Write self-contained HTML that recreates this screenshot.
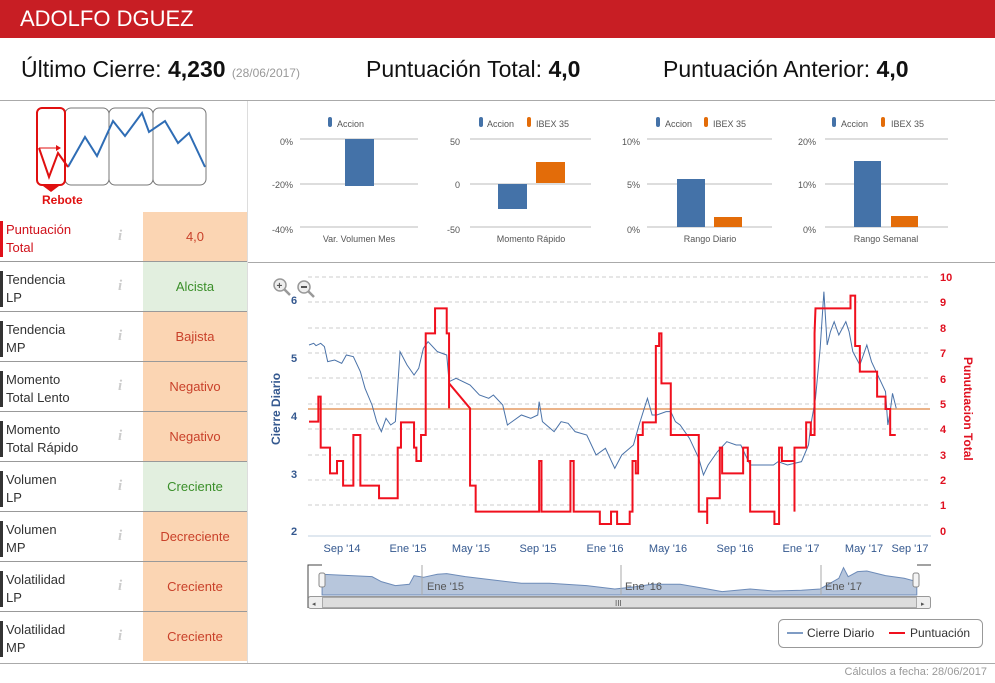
<!DOCTYPE html>
<html><head><meta charset="utf-8"><style>
*{margin:0;padding:0;box-sizing:border-box}
body{width:995px;height:683px;background:#fff;font-family:"Liberation Sans",sans-serif;position:relative;overflow:hidden;color:#222}
.hdr{position:absolute;left:0;top:0;width:995px;height:38px;background:#c81e24;color:#fff;font-size:22px;padding:6px 0 0 20px}
.top{position:absolute;top:56px;font-size:23px;color:#111}
.top b{font-weight:bold}
.top small{font-size:12px;color:#999}
.row{position:absolute;left:0;width:247px;height:50px;border-bottom:1px solid #999}
.row .acc{position:absolute;left:0;top:9px;width:3px;height:36px;background:#333}
.row .lab{position:absolute;left:6px;top:9px;font-size:13px;line-height:18px;color:#333}
.row .i{position:absolute;left:118px;top:16px;font-size:15px;font-style:italic;color:#ccc;font-family:"Liberation Serif",serif;font-weight:bold}
.row .v{position:absolute;left:143px;top:0;width:104px;height:49px;text-align:center;line-height:49px;font-size:13px}
.o{background:#fbd5b3;color:#c9412a}
.g{background:#e2efdf;color:#3b8f2a}
</style></head><body>
<div class="hdr">ADOLFO DGUEZ</div>
<div class="top" style="left:21px">Último Cierre: <b>4,230</b> <small>(28/06/2017)</small></div>
<div class="top" style="left:366px">Puntuación Total: <b>4,0</b></div>
<div class="top" style="left:663px">Puntuación Anterior: <b>4,0</b></div>
<div style="position:absolute;left:0;top:100px;width:995px;height:1px;background:#aaa"></div>
<div style="position:absolute;left:247px;top:262px;width:748px;height:1px;background:#aaa"></div>
<div style="position:absolute;left:247px;top:101px;width:1px;height:562px;background:#ddd"></div>
<div style="position:absolute;left:0;top:663px;width:995px;height:1px;background:#aaa"></div>
<div style="position:absolute;right:8px;top:666px;font-size:11px;color:#999">Cálculos a fecha: 28/06/2017</div>

<div class="row" style="top:212px"><div class="acc" style="background:#e0101a"></div><div class="lab" style="color:#d0101a">Puntuación<br>Total</div><div class="i">i</div><div class="v o">4,0</div></div>
<div class="row" style="top:262px"><div class="acc"></div><div class="lab">Tendencia<br>LP</div><div class="i">i</div><div class="v g">Alcista</div></div>
<div class="row" style="top:312px"><div class="acc"></div><div class="lab">Tendencia<br>MP</div><div class="i">i</div><div class="v o">Bajista</div></div>
<div class="row" style="top:362px"><div class="acc"></div><div class="lab">Momento<br>Total Lento</div><div class="i">i</div><div class="v o">Negativo</div></div>
<div class="row" style="top:412px"><div class="acc"></div><div class="lab">Momento<br>Total Rápido</div><div class="i">i</div><div class="v o">Negativo</div></div>
<div class="row" style="top:462px"><div class="acc"></div><div class="lab">Volumen<br>LP</div><div class="i">i</div><div class="v g">Creciente</div></div>
<div class="row" style="top:512px"><div class="acc"></div><div class="lab">Volumen<br>MP</div><div class="i">i</div><div class="v o">Decreciente</div></div>
<div class="row" style="top:562px"><div class="acc"></div><div class="lab">Volatilidad<br>LP</div><div class="i">i</div><div class="v o">Creciente</div></div>
<div class="row" style="top:612px;border-bottom:none"><div class="acc"></div><div class="lab">Volatilidad<br>MP</div><div class="i">i</div><div class="v o">Creciente</div></div>

<svg style="position:absolute;left:0;top:0" width="995" height="683">
<!-- sparkline -->
<rect x="65" y="108" width="44" height="77" rx="6" fill="none" stroke="#777"/>
<rect x="109" y="108" width="44" height="77" rx="6" fill="none" stroke="#777"/>
<rect x="153" y="108" width="53" height="77" rx="6" fill="none" stroke="#777"/>
<rect x="37" y="108" width="28" height="77" rx="5" fill="none" stroke="#e01010" stroke-width="2"/>
<polygon points="43,186 59,186 51,192" fill="#e01010"/>
<polyline points="68,167 85,137 97,156 113,121 125,136 142,113 149,132 165,121 178,143 189,133 205,167" fill="none" stroke="#2f6db5" stroke-width="2"/>
<polyline points="39,148 49,177 58,153 68,167" fill="none" stroke="#e01010" stroke-width="2"/>
<line x1="39" y1="148" x2="58" y2="148" stroke="#e01010"/><polygon points="61,148 56,145 56,151" fill="#e01010"/>
<text x="42" y="204" font-size="12" font-weight="bold" fill="#e01010">Rebote</text>

<!-- bar charts -->
<g font-size="9" fill="#555">
<rect x="328" y="117" width="4" height="10" rx="2" fill="#4472a8"/><text x="337" y="127">Accion</text>
<line x1="300" y1="139" x2="418" y2="139" stroke="#bbb"/><line x1="300" y1="184" x2="418" y2="184" stroke="#bbb"/><line x1="300" y1="227" x2="418" y2="227" stroke="#bbb"/>
<text x="293" y="145" text-anchor="end">0%</text><text x="293" y="188" text-anchor="end">-20%</text><text x="293" y="233" text-anchor="end">-40%</text>
<rect x="345" y="139" width="29" height="47" fill="#4472a8"/><text x="359" y="242" text-anchor="middle">Var. Volumen Mes</text>

<rect x="479" y="117" width="4" height="10" rx="2" fill="#4472a8"/><text x="487" y="127">Accion</text>
<rect x="527" y="117" width="4" height="10" rx="2" fill="#e36c09"/><text x="536" y="127">IBEX 35</text>
<line x1="470" y1="139" x2="591" y2="139" stroke="#bbb"/><line x1="470" y1="184" x2="591" y2="184" stroke="#bbb"/><line x1="470" y1="227" x2="591" y2="227" stroke="#bbb"/>
<text x="460" y="145" text-anchor="end">50</text><text x="460" y="188" text-anchor="end">0</text><text x="460" y="233" text-anchor="end">-50</text>
<rect x="498" y="184" width="29" height="25" fill="#4472a8"/><rect x="536" y="162" width="29" height="21" fill="#e36c09"/>
<text x="531" y="242" text-anchor="middle">Momento Rápido</text>

<rect x="656" y="117" width="4" height="10" rx="2" fill="#4472a8"/><text x="665" y="127">Accion</text>
<rect x="704" y="117" width="4" height="10" rx="2" fill="#e36c09"/><text x="713" y="127">IBEX 35</text>
<line x1="647" y1="139" x2="772" y2="139" stroke="#bbb"/><line x1="647" y1="184" x2="772" y2="184" stroke="#bbb"/><line x1="647" y1="227" x2="772" y2="227" stroke="#bbb"/>
<text x="640" y="145" text-anchor="end">10%</text><text x="640" y="188" text-anchor="end">5%</text><text x="640" y="233" text-anchor="end">0%</text>
<rect x="677" y="179" width="28" height="48" fill="#4472a8"/><rect x="714" y="217" width="28" height="10" fill="#e36c09"/>
<text x="710" y="242" text-anchor="middle">Rango Diario</text>

<rect x="832" y="117" width="4" height="10" rx="2" fill="#4472a8"/><text x="841" y="127">Accion</text>
<rect x="881" y="117" width="4" height="10" rx="2" fill="#e36c09"/><text x="891" y="127">IBEX 35</text>
<line x1="825" y1="139" x2="948" y2="139" stroke="#bbb"/><line x1="825" y1="184" x2="948" y2="184" stroke="#bbb"/><line x1="825" y1="227" x2="948" y2="227" stroke="#bbb"/>
<text x="816" y="145" text-anchor="end">20%</text><text x="816" y="188" text-anchor="end">10%</text><text x="816" y="233" text-anchor="end">0%</text>
<rect x="854" y="161" width="27" height="66" fill="#4472a8"/><rect x="891" y="216" width="27" height="11" fill="#e36c09"/>
<text x="886" y="242" text-anchor="middle">Rango Semanal</text>
</g>

<!-- main chart -->
<g stroke="#ccc" stroke-dasharray="4,3">
<line x1="308" y1="277" x2="931" y2="277"/><line x1="308" y1="302" x2="931" y2="302"/><line x1="308" y1="328" x2="931" y2="328"/><line x1="308" y1="353" x2="931" y2="353"/><line x1="308" y1="378" x2="931" y2="378"/><line x1="308" y1="404" x2="931" y2="404"/><line x1="308" y1="429" x2="931" y2="429"/><line x1="308" y1="455" x2="931" y2="455"/><line x1="308" y1="480" x2="931" y2="480"/><line x1="308" y1="505" x2="931" y2="505"/>
</g>
<line x1="308" y1="536" x2="931" y2="536" stroke="#c0d0e0"/>
<g fill="#34588f" font-size="11" font-weight="bold"><text x="291" y="304">6</text><text x="291" y="362">5</text><text x="291" y="420">4</text><text x="291" y="478">3</text><text x="291" y="535">2</text></g>
<g fill="#e01020" font-size="11" font-weight="bold"><text x="940" y="281">10</text><text x="940" y="306">9</text><text x="940" y="332">8</text><text x="940" y="357">7</text><text x="940" y="383">6</text><text x="940" y="408">5</text><text x="940" y="433">4</text><text x="940" y="459">3</text><text x="940" y="484">2</text><text x="940" y="509">1</text><text x="940" y="535">0</text></g>
<text transform="translate(280,445) rotate(-90)" fill="#34588f" font-size="12" font-weight="bold">Cierre Diario</text>
<text transform="translate(964,357) rotate(90)" fill="#e01020" font-size="12" font-weight="bold">Punutuacion Total</text>
<g fill="#34588f" font-size="11" text-anchor="middle"><text x="342" y="552">Sep '14</text><text x="408" y="552">Ene '15</text><text x="471" y="552">May '15</text><text x="538" y="552">Sep '15</text><text x="605" y="552">Ene '16</text><text x="668" y="552">May '16</text><text x="735" y="552">Sep '16</text><text x="801" y="552">Ene '17</text><text x="864" y="552">May '17</text><text x="910" y="552">Sep '17</text></g>
<line x1="308" y1="409" x2="930" y2="409" stroke="#ebb389" stroke-width="2"/>
<g transform="translate(260,265) scale(0.4668,0.3333)">
<polyline vector-effect="non-scaling-stroke" fill="none" stroke="#4a72a8" stroke-width="1" points="105,240 115,235 120,242 130,235 138,245 145,290 160,285 175,295 185,270 200,275 215,320 225,370 240,420 250,470 260,500 270,460 280,480 290,470 300,260 315,300 330,330 340,310 350,250 360,230 380,260 400,270 405,350 420,340 450,360 470,390 490,400 500,390 520,420 530,480 560,450 580,460 595,450 598,410 605,470 630,500 645,470 660,475 675,500 700,510 720,570 740,550 760,610 775,570 800,540 812,480 830,400 840,450 850,450 870,440 880,440 890,470 900,480 920,520 940,580 950,630 960,600 980,560 1000,530 1020,540 1030,540 1040,570 1050,600 1070,600 1100,600 1110,590 1130,600 1160,590 1175,540 1180,480 1190,400 1200,250 1208,80 1215,240 1222,200 1230,170 1240,210 1255,170 1262,200 1270,260 1285,300 1300,240 1310,290 1320,320 1330,350 1340,380 1345,480 1350,440 1355,385 1363,430"/>
<polyline vector-effect="non-scaling-stroke" fill="none" stroke="#f0101e" stroke-width="2" points="105,470 125,470 125,395 130,395 130,548 150,548 150,625 165,625 165,588 178,588 178,662 200,662 200,510 215,510 215,662 255,662 255,700 295,700 295,548 302,548 302,472 330,472 330,548 335,548 335,588 345,588 345,510 355,510 355,205 375,205 375,130 400,130 400,205 405,205 405,430 405,355 450,430 450,662 462,662 462,740 598,740 598,588 603,588 603,740 665,740 665,588 672,588 672,740 728,740 728,777 752,777 752,740 765,740 765,777 792,777 792,740 798,740 798,588 805,588 805,625 810,625 810,510 820,510 820,472 848,472 848,243 855,243 855,205 860,205 860,355 880,355 880,510 940,510 940,740 958,740 958,777 958,700 985,700 985,548 990,548 990,625 1035,625 1035,548 1045,548 1045,588 1050,588 1050,740 1102,740 1102,777 1112,777 1112,548 1118,548 1118,588 1145,588 1145,740 1145,548 1170,548 1170,472 1180,472 1180,510 1188,510 1188,205 1190,130 1265,130 1265,92 1275,92 1275,243 1285,243 1285,320 1322,320 1322,395 1340,395 1340,432 1350,432 1350,510 1362,510"/>
<path fill="#b7c6dc" stroke="#6d8bb8" vector-effect="non-scaling-stroke" d="M133,990 L133,928 L240,935 L260,950 L290,962 L320,958 L330,932 L350,937 L380,928 L400,926 L440,935 L500,945 L560,955 L620,955 L700,962 L760,972 L800,966 L840,958 L900,958 L950,970 L990,980 L1050,972 L1100,978 L1160,976 L1200,972 L1240,940 L1250,908 L1260,935 L1280,920 L1300,918 L1340,932 L1380,940 L1407,950 L1407,990 Z"/>
</g>
<!-- navigator overlays -->
<g stroke="#aaa"><line x1="422" y1="565" x2="422" y2="595"/><line x1="621" y1="565" x2="621" y2="595"/><line x1="821" y1="565" x2="821" y2="595"/></g>
<g font-size="11" fill="#555"><text x="427" y="590">Ene '15</text><text x="625" y="590">Ene '16</text><text x="825" y="590">Ene '17</text></g>
<path d="M308,608 L308,565 L322,565 M917,565 L931,565" fill="none" stroke="#444" stroke-width="1"/>
<rect x="319" y="573" width="6" height="14" rx="2" fill="#f4f4f4" stroke="#888"/>
<rect x="913" y="573" width="6" height="14" rx="2" fill="#f4f4f4" stroke="#888"/>
<rect x="308.5" y="596.5" width="622" height="12" rx="2" fill="#eee" stroke="#999"/>
<rect x="322.5" y="597.5" width="594" height="10" fill="#ddd" stroke="#aaa"/>
<text x="615" y="606" font-size="8" fill="#555">III</text>
<text x="312" y="606" font-size="7" fill="#555">◂</text><text x="921" y="606" font-size="7" fill="#555">▸</text>
<!-- zoom icons -->
<circle cx="280" cy="285" r="6" fill="#eee" stroke="#999" stroke-width="1.5"/><line x1="284" y1="289" x2="290" y2="295" stroke="#999" stroke-width="2.5"/><text x="276.5" y="289" font-size="10" font-weight="bold" fill="#555">+</text>
<circle cx="304" cy="287" r="6" fill="#eee" stroke="#999" stroke-width="1.5"/><line x1="308" y1="291" x2="314" y2="297" stroke="#999" stroke-width="2.5"/><line x1="301" y1="287" x2="307" y2="287" stroke="#555" stroke-width="2"/>
<!-- legend -->
<rect x="778.5" y="619.5" width="204" height="28" rx="5" fill="#fff" stroke="#999"/>
<line x1="787" y1="633" x2="803" y2="633" stroke="#7f9cc4" stroke-width="2"/>
<text x="807" y="637" font-size="12" fill="#333">Cierre Diario</text>
<line x1="889" y1="633" x2="905" y2="633" stroke="#f0101e" stroke-width="2"/>
<text x="910" y="637" font-size="12" fill="#333">Puntuación</text>
</svg>
</body></html>
